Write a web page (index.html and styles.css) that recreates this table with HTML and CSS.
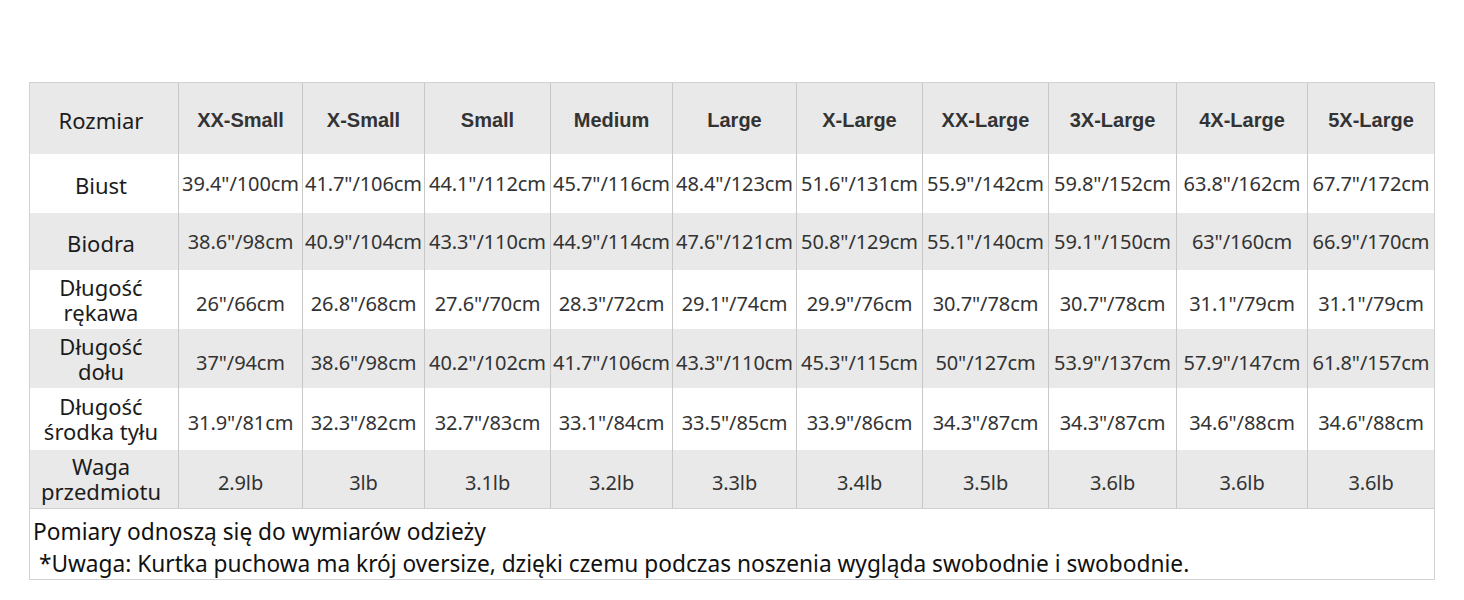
FILE: index.html
```html
<!DOCTYPE html>
<html lang="pl">
<head>
<meta charset="utf-8">
<title>Tabela rozmiarów</title>
<link rel="stylesheet" href="styles.css">
</head>
<body>
<div class="chart">
  <div class="row head">
    <div class="cell label">Rozmiar</div>
    <div class="cell size">XX-Small</div>
    <div class="cell size">X-Small</div>
    <div class="cell size">Small</div>
    <div class="cell size">Medium</div>
    <div class="cell size">Large</div>
    <div class="cell size">X-Large</div>
    <div class="cell size">XX-Large</div>
    <div class="cell size">3X-Large</div>
    <div class="cell size">4X-Large</div>
    <div class="cell size">5X-Large</div>
  </div>
  <div class="row white r1">
    <div class="cell label">Biust</div>
    <div class="cell">39.4"/100cm</div>
    <div class="cell">41.7"/106cm</div>
    <div class="cell">44.1"/112cm</div>
    <div class="cell">45.7"/116cm</div>
    <div class="cell">48.4"/123cm</div>
    <div class="cell">51.6"/131cm</div>
    <div class="cell">55.9"/142cm</div>
    <div class="cell">59.8"/152cm</div>
    <div class="cell">63.8"/162cm</div>
    <div class="cell">67.7"/172cm</div>
  </div>
  <div class="row gray r2">
    <div class="cell label">Biodra</div>
    <div class="cell">38.6"/98cm</div>
    <div class="cell">40.9"/104cm</div>
    <div class="cell">43.3"/110cm</div>
    <div class="cell">44.9"/114cm</div>
    <div class="cell">47.6"/121cm</div>
    <div class="cell">50.8"/129cm</div>
    <div class="cell">55.1"/140cm</div>
    <div class="cell">59.1"/150cm</div>
    <div class="cell">63"/160cm</div>
    <div class="cell">66.9"/170cm</div>
  </div>
  <div class="row white r3">
    <div class="cell label two"><span class="ln">Długość</span><span class="ln">rękawa</span></div>
    <div class="cell low">26"/66cm</div>
    <div class="cell low">26.8"/68cm</div>
    <div class="cell low">27.6"/70cm</div>
    <div class="cell low">28.3"/72cm</div>
    <div class="cell low">29.1"/74cm</div>
    <div class="cell low">29.9"/76cm</div>
    <div class="cell low">30.7"/78cm</div>
    <div class="cell low">30.7"/78cm</div>
    <div class="cell low">31.1"/79cm</div>
    <div class="cell low">31.1"/79cm</div>
  </div>
  <div class="row gray r4">
    <div class="cell label two"><span class="ln">Długość</span><span class="ln">dołu</span></div>
    <div class="cell low">37"/94cm</div>
    <div class="cell low">38.6"/98cm</div>
    <div class="cell low">40.2"/102cm</div>
    <div class="cell low">41.7"/106cm</div>
    <div class="cell low">43.3"/110cm</div>
    <div class="cell low">45.3"/115cm</div>
    <div class="cell low">50"/127cm</div>
    <div class="cell low">53.9"/137cm</div>
    <div class="cell low">57.9"/147cm</div>
    <div class="cell low">61.8"/157cm</div>
  </div>
  <div class="row white r5">
    <div class="cell label two"><span class="ln">Długość</span><span class="ln">środka tyłu</span></div>
    <div class="cell low">31.9"/81cm</div>
    <div class="cell low">32.3"/82cm</div>
    <div class="cell low">32.7"/83cm</div>
    <div class="cell low">33.1"/84cm</div>
    <div class="cell low">33.5"/85cm</div>
    <div class="cell low">33.9"/86cm</div>
    <div class="cell low">34.3"/87cm</div>
    <div class="cell low">34.3"/87cm</div>
    <div class="cell low">34.6"/88cm</div>
    <div class="cell low">34.6"/88cm</div>
  </div>
  <div class="row gray r6">
    <div class="cell label two"><span class="ln">Waga</span><span class="ln">przedmiotu</span></div>
    <div class="cell low">2.9lb</div>
    <div class="cell low">3lb</div>
    <div class="cell low">3.1lb</div>
    <div class="cell low">3.2lb</div>
    <div class="cell low">3.3lb</div>
    <div class="cell low">3.4lb</div>
    <div class="cell low">3.5lb</div>
    <div class="cell low">3.6lb</div>
    <div class="cell low">3.6lb</div>
    <div class="cell low">3.6lb</div>
  </div>
  <div class="notes">
    <p class="note">Pomiary odnoszą się do wymiarów odzieży</p>
    <p class="note">&nbsp;*Uwaga: Kurtka puchowa ma krój oversize, dzięki czemu podczas noszenia wygląda swobodnie i swobodnie.</p>
  </div>
</div>
</body>
</html>
```

FILE: styles.css
```css
html, body {
  margin: 0;
  padding: 0;
  background: #ffffff;
}

body {
  font-family: "Noto Sans", "Open Sans", sans-serif;
  color: #222222;
}

.chart {
  margin: 82px 0 0 29px;
  width: 1406px;
  box-sizing: border-box;
  border: 1px solid #d2d2d2;
}

.row {
  display: grid;
  grid-template-columns: 148px 124px 122px 126px 122px 124px 126px 126px 128px 131px 127px;
}

.head { height: 71px; background: #e9e9e9; }
.r1 { height: 59px; }
.r2 { height: 57px; }
.r3 { height: 59px; }
.r4 { height: 59px; }
.r5 { height: 62px; }
.r6 { height: 58px; border-bottom: 1px solid #cfcfcf; }

.white { background: #ffffff; }
.gray { background: #e9e9e9; }

.cell {
  box-sizing: border-box;
  border-left: 1px solid #c8c8c8;
  display: flex;
  align-items: center;
  justify-content: center;
  text-align: center;
  font-size: 20px;
  letter-spacing: -0.1px;
  color: #333333;
  white-space: nowrap;
  padding-top: 0;
}

.cell:first-child {
  border-left: 0;
  padding-right: 6px;
}

.cell.low {
  padding-top: 7px;
}

.label {
  font-size: 22px;
  letter-spacing: 0;
  color: #1c1c1c;
  padding-top: 3px;
}

.label.two {
  flex-direction: column;
  gap: 0;
  padding-top: 0;
}

.ln {
  display: block;
  height: 25px;
  line-height: 25px;
}

.size {
  font-family: "Liberation Sans", Arial, sans-serif;
  font-weight: bold;
  font-size: 20px;
  letter-spacing: 0;
  color: #333333;
  padding-top: 4px;
}

.notes {
  height: 70px;
  padding: 7px 0 0 3px;
  box-sizing: border-box;
}

.note {
  margin: 0;
  font-size: 22.7px;
  line-height: 32px;
  color: #111111;
  white-space: pre;
}
```
